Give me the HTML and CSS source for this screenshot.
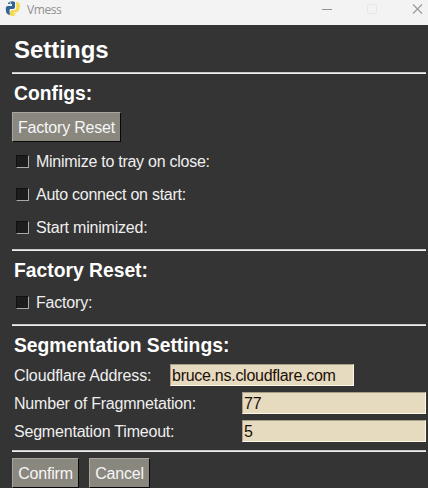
FILE: index.html
```html
<!DOCTYPE html>
<html lang="en">
<head>
<meta charset="utf-8">
<title>Vmess</title>
<link rel="stylesheet" href="styles.css">
</head>
<body>
<header class="titlebar">
  <svg class="logo" viewBox="0 0 16 18" width="16" height="18">
    <path d="M3 3Q6 0 10 2V7Q10 9 7 9H5Q4 10 5 15Q1 14 1 11Q0 6 3 6H7V4H3Z" fill="#2f6495"/>
    <path d="M11 2Q15 2 15 6Q14 12 12 12H9V13H11V14Q9 18 5 15V12Q5 10 8 10H10Q12 9 11 2Z" fill="#f4d94e"/>
    <circle cx="5.5" cy="3" r=".8" fill="#dce8f1"/>
    <circle cx="9.5" cy="14.5" r=".8" fill="#fffbe0"/>
  </svg>
  <span class="caption">Vmess</span>
  <svg class="controls" width="108" height="18" viewBox="0 0 108 18" fill="none">
    <path d="M2 9.5H12" stroke="#929292"/>
    <rect x="47.5" y="4.500" width="9" height="9" rx="1" stroke="#e6e6e6"/>
    <path d="M93 4.500L102 13.500M102 4.500L93 13.500" stroke="#9a9a9a" stroke-width="1.1"/>
  </svg>
</header>
<main class="window">
  <h1>Settings</h1>
  <hr>
  <section class="configs">
    <h2>Configs:</h2>
    <button class="btn reset">Factory Reset</button>
    <label class="check tight"><i class="box"></i><span>Minimize to tray on close:</span></label>
    <label class="check tight"><i class="box"></i><span>Auto connect on start:</span></label>
    <label class="check"><i class="box"></i><span>Start minimized:</span></label>
  </section>
  <hr>
  <section class="factory">
    <h2>Factory Reset:</h2>
    <label class="check"><i class="box"></i><span>Factory:</span></label>
  </section>
  <hr>
  <section class="segmentation">
    <h2>Segmentation Settings:</h2>
    <label class="field"><span class="wide">Cloudflare Address:</span><input class="address" value="bruce.ns.cloudflare.com"></label>
    <label class="field"><span>Number of Fragmnetation:</span><input value="77"></label>
    <label class="field"><span>Segmentation Timeout:</span><input value="5"></label>
  </section>
  <hr>
  <footer class="actions">
    <button class="btn confirm">Confirm</button>
    <button class="btn cancel">Cancel</button>
  </footer>
</main>
</body>
</html>
```
FILE: styles.css
```css
* { box-sizing: border-box; }
body {
  margin: 0;
  height: 488px;
  overflow: hidden;
  background: #343434;
  color: #efefef;
  font: 16px/20px "Liberation Sans", Arial, sans-serif;
  letter-spacing: -0.2px;
}
.titlebar {
  display: flex;
  height: 25px;
  padding-left: 5px;
  background: #f3f3f3;
  color: #909090;
}
.logo { margin-right: 6px; }
.caption { font: 12px/19px "Open Sans", sans-serif; letter-spacing: -0.4px; }
.controls { margin-left: auto; }
.window { padding: 0 2px 0 12px; }
h1, h2 { margin: 0; padding-left: 2px; color: #fff; font-weight: bold; }
h1 { height: 47px; font-size: 24px; line-height: 50px; letter-spacing: 0; }
h2 { height: 38px; font-size: 19.3px; line-height: 40px; letter-spacing: 0; }
hr { height: 2px; margin: 0; border: 0; background: #c8c8c4; border-bottom: 1px solid #eee; }
.configs { height: 175px; }
.factory { height: 73px; }
.segmentation { height: 124px; }
.btn {
  display: block;
  height: 30px;
  padding: 2px 0 0;
  border: 1px solid;
  border-color: #aaa69d #080808 #080808 #aaa69d;
  background: #8a877e;
  color: #f6f6f6;
  font: inherit;
  letter-spacing: inherit;
  text-align: center;
}
.reset { width: 109px; margin-bottom: 3px; }
.check { display: flex; align-items: center; height: 33px; padding-left: 4px; }
.tight { letter-spacing: -0.26px; }
.factory .check { height: 26px; }
.factory .check span { padding-top: 2px; }
.box {
  width: 13px;
  height: 13px;
  margin-right: 7px;
  background: #1d1d1d;
  border: 1px solid;
  border-color: #111 #aaa #aaa #111;
}
.field { display: flex; align-items: center; height: 22px; margin-bottom: 6px; padding-left: 2px; }
.field span { padding-top: 2px; }
.wide { letter-spacing: -0.12px; }
.field input {
  width: 184px;
  height: 22px;
  margin-left: auto;
  padding: 2px 1px 0;
  border: 1px solid;
  border-color: #a99f88 #fff8e8 #fff8e8 #a99f88;
  border-radius: 0;
  background: #e6dabf;
  color: #1b1008;
  font: inherit;
  letter-spacing: inherit;
}
.field .address { margin-right: 72px; letter-spacing: -0.27px; }
.actions { display: flex; gap: 10px; padding-top: 6px; }
.confirm { width: 67px; }
.cancel { width: 61px; }
```
